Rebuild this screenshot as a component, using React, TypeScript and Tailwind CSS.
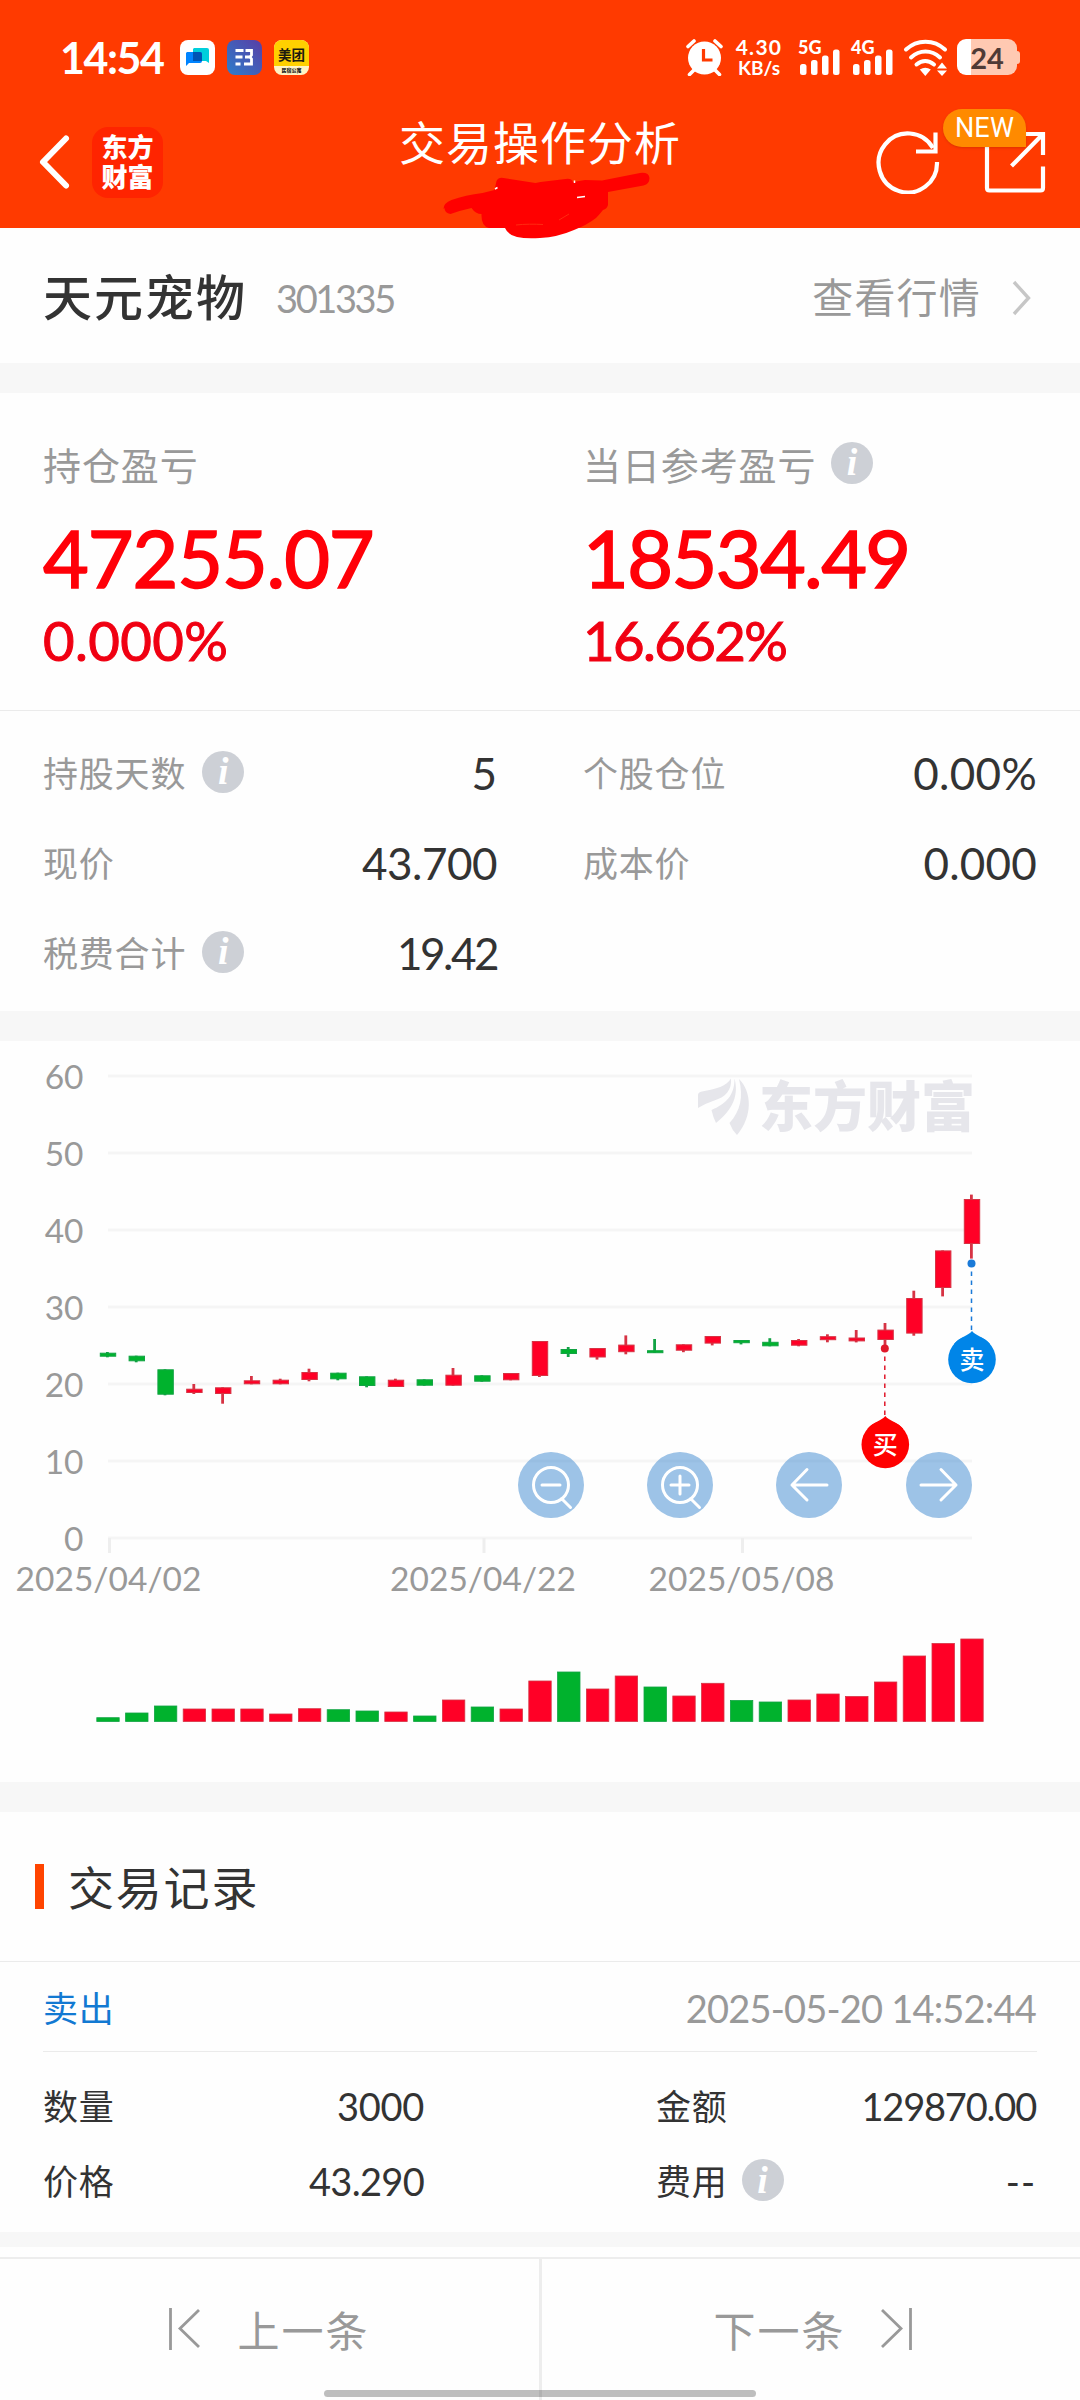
import { Fragment } from "react";
import type { ReactNode } from "react";

type Candle = {
  up: boolean;
  top: number;
  bottom: number;
  high: number;
  low: number;
  volume: number;
};

const RED = "#ff0026";
const GREEN = "#00b22d";
const RED_EDGE = "#d63344";
const GREEN_EDGE = "#12a344";

// up, body top, body bottom, wick top, wick bottom, volume height
const rows: [number, number, number, number, number, number][] = [
  [0, 311.7, 315.7, 311, 316.3, 4.3],
  [0, 314.7, 320.3, 314.7, 321.3, 9],
  [0, 328.3, 353.7, 328.3, 354.3, 16],
  [1, 347.7, 352, 343, 353, 13],
  [1, 346.3, 353, 346.3, 362.7, 13],
  [1, 339.3, 343.3, 335, 343.3, 13],
  [1, 338.7, 343.3, 337.7, 343.3, 8],
  [1, 331, 339, 327.7, 340.3, 13.3],
  [0, 331.7, 338.3, 331.7, 339.3, 12.3],
  [0, 335.3, 345, 335.3, 346.3, 11],
  [1, 338.7, 346, 337.7, 346, 10],
  [0, 338.3, 344.7, 338.3, 344.7, 6],
  [1, 333.7, 344.7, 327, 344.7, 22],
  [0, 334.3, 340.7, 334.3, 340.7, 15],
  [1, 332, 339.3, 332, 339.3, 13],
  [1, 300, 335, 300, 336, 41],
  [0, 308, 313, 306, 316, 50],
  [1, 307, 316.5, 307, 318.6, 33],
  [1, 303.6, 311.2, 294.4, 313.3, 46],
  [0, 309.2, 312, 298, 312, 35],
  [1, 303.3, 309.7, 303.3, 311.2, 26],
  [1, 295, 302.6, 295, 304.4, 38.7],
  [0, 299, 302.2, 299, 303.4, 21.5],
  [0, 300.8, 305.3, 297.2, 305.3, 20],
  [1, 299, 304.7, 298, 305.3, 22],
  [1, 295.2, 299.2, 293.3, 301.3, 28],
  [1, 296.5, 300.4, 289, 301.4, 25.5],
  [1, 288.6, 299, 282, 305, 40],
  [1, 257, 292.6, 249.7, 294.7, 66],
  [1, 209.4, 247, 209.4, 255.4, 78.5],
  [1, 158, 203, 153.6, 217.6, 83],
];

const candles: Candle[] = rows.map(([up, top, bottom, high, low, volume]) => ({
  up: up === 1,
  top,
  bottom,
  high,
  low,
  volume,
}));

const STEP = 28.8;
const LEFT = 108;
const yTicks = [60, 50, 40, 30, 20, 10, 0];
const xTicks = [
  { x: 109.5, label: "2025/04/02" },
  { x: 484, label: "2025/04/22" },
  { x: 742.5, label: "2025/05/08" },
];

const InfoIcon = () => (
  <span className="flex h-[42px] w-[42px] shrink-0 items-center justify-center rounded-full bg-[#cdd0d6] pb-px text-[38px] leading-none font-bold text-white italic [font-family:'Liberation_Serif',serif]">
    i
  </span>
);

const Signal = ({ label }: { label: string }) => (
  <div className="flex h-9 w-[43px] flex-col justify-between">
    <span className="h-0 text-[18px] leading-[16px] font-black">{label}</span>
    <svg width="43" height="26" viewBox="0 0 43 26" fill="currentColor">
      <rect x="2" y="15" width="6.5" height="11" rx="2.5" />
      <rect x="13" y="11" width="6.5" height="15" rx="2.5" />
      <rect x="24" y="6.5" width="6.5" height="19.5" rx="2.5" />
      <rect x="35" y="0.5" width="6.5" height="25.5" rx="2.5" />
    </svg>
  </div>
);

const StatusBar = () => (
  <div className="flex h-[114px] items-center pr-[60px] pl-[60px] text-white">
    <span className="w-[120px] text-[43px] leading-none font-bold tracking-[-1.5px]">14:54</span>
    <div className="flex items-center gap-3">
      <svg width="35" height="35" viewBox="0 0 35 35">
        <rect width="35" height="35" rx="8" fill="#fff" />
        <path d="M14 8h13a2 2 0 0 1 2 2v13l-3-2H13V9z" fill="#00cfdc" />
        <path d="M7 12h13a2 2 0 0 1 2 2v7a2 2 0 0 1-2 2H9l-3 3V13z" fill="#0084ff" />
        <path d="M13 12h7a2 2 0 0 1 2 2v7h-9z" fill="#0054b4" />
      </svg>
      <svg width="35" height="35" viewBox="0 0 35 35">
        <defs>
          <linearGradient id="app" x1="0" y1="1" x2="1" y2="0">
            <stop offset="0" stopColor="#2d7ecb" />
            <stop offset="1" stopColor="#5a3da5" />
          </linearGradient>
        </defs>
        <rect width="35" height="35" rx="8" fill="url(#app)" />
        <path d="M8.500 10.500h8M8.500 17h7M8.500 24h5M18.500 10.500h6v4.500l-1.500 2 1.500 2v5h-7.500M18 17h5" fill="none" stroke="#fff" strokeWidth="2.800" />
      </svg>
      <div className="flex h-[35px] w-[35px] flex-col items-center overflow-hidden rounded-lg bg-[#fff3c4]">
        <span className="h-[26px] w-full bg-[#ffd000] pt-[2px] text-center text-[13.500px] leading-[27px] font-bold text-[#1c1a10]">
          美团
        </span>
        <span className="text-[5px] leading-[8px] font-black text-[#222]">民宿公寓</span>
      </div>
    </div>
    <div className="ml-auto flex items-center">
      <svg className="mr-[11px]" width="37" height="37" viewBox="0 0 37 37">
        <path d="M2 7.500 8 2M29 2l6 5.500M8 31l-4.500 4.500M29 31l4.500 4.500" stroke="#fff" strokeWidth="3.600" strokeLinecap="round" />
        <circle cx="18.500" cy="19" r="16.500" fill="#fff" />
        <path d="M17.500 10v11h9" fill="none" stroke="#ff3a00" strokeWidth="3.200" />
      </svg>
      <div className="mr-[14px] w-[50px] text-center font-bold whitespace-nowrap">
        <div className="text-[21px] leading-[21px] tracking-[1.300px]">4.30</div>
        <div className="text-[19px] leading-[21px]">KB/s</div>
      </div>
      <div className="mr-[10px]">
        <Signal label="5G" />
      </div>
      <div className="mr-[9px]">
        <Signal label="4G" />
      </div>
      <svg className="mr-[9px]" width="45" height="37" viewBox="0 0 45 37">
        <g fill="none" stroke="#fff" strokeWidth="4" strokeLinecap="round">
          <path d="M3 10.500c11-10.500 28-10.500 39 0" />
          <path d="M8 18.500c8.500-8 20.500-8 29 0" />
          <path d="M13.500 25.500c5.500-4.600 12-4.600 17.500 0" />
        </g>
        <path d="M16.800 30.500q5.500-3.500 11 0L22.300 37z" fill="#fff" />
        <path d="M39 23.500l5 6H34zM39 37l5-5.500H34z" fill="#fff" />
      </svg>
      <div className="flex h-9 w-[60px] items-center justify-center rounded-[9px] bg-[linear-gradient(90deg,#fff_14px,#ffc9b2_14px)] text-[29px] leading-none font-bold text-[#4f3a36]">
        24
      </div>
      <span className="h-[13px] w-[3px] rounded-r bg-[#ffc9b2]" />
    </div>
  </div>
);

const Header = () => (
  <header className="relative h-[228px] bg-[#ff3a00]">
    <StatusBar />
    <div className="flex h-[96px] items-center pr-[34px] pl-[38px] text-white">
      <svg width="34" height="56" viewBox="0 0 34 56" fill="none">
        <path d="M28 4.500 5 28l23 23.500" stroke="#fff" strokeWidth="6" strokeLinecap="round" strokeLinejoin="round" />
      </svg>
      <div className="ml-[20px] flex h-[71px] w-[71px] flex-col items-center justify-center rounded-2xl bg-[#ff2400] text-[26px] leading-[30px] font-black">
        <span>东方</span>
        <span>财富</span>
      </div>
      <h1 className="ml-[236px] pb-[38px] text-[46px] leading-none tracking-[1px]">交易操作分析</h1>
      <div className="ml-auto flex items-center gap-[44px]">
        <svg width="64" height="64" viewBox="0 0 64 64" fill="none" stroke="#fff" strokeWidth="4.200">
          <path d="M61 32A29.200 29.500 0 1 1 57 18" />
          <path d="M59.500 2.500V21.500H40" />
        </svg>
        <div className="relative">
          <svg width="62" height="64" viewBox="0 0 62 64" fill="none" stroke="#fff" strokeWidth="4.200">
            <path d="M3 8v50q0 2.500 2.500 2.500h51q2.500 0 2.500-2.500V36.500" />
            <path d="M59 25V4H38M59 4 27.500 36" />
          </svg>
          <span className="absolute -top-[21px] -left-[41px] flex h-[38px] w-[83px] items-center justify-center rounded-[19px] rounded-br-none bg-[#ff8a00] text-[27px] tracking-[0.200px] shadow [font-family:Roboto,sans-serif]">
            NEW
          </span>
        </div>
      </div>
    </div>
    <svg className="absolute top-[170px] left-[440px]" width="214" height="72" viewBox="440 170 214 72">
      <path
        d="M443.500 209q0-6 8-9 14-5 31-7l12-3 2-9q2-4 7-3l32 5 5-1 25-3q6-1 7.500 3l12-2 17 .5 38-7.500q9-1 9.500 5 0 6-6 7.500L608 192v13q-1 4-5 5-4 5-7 8-9 7-22 12-16 7-34 8-14 1-23-1-9-2-12-9h-16q-8-2-7.500-14-6 0-10-6l-12 3-9 3q-6-1-6-6z"
        fill="#f00"
      />
      <path d="M495 189l2.500-1.500M574.500 180.500v2.500M577 197.500l8-1" stroke="#fff" strokeWidth="1.500" />
      <path d="M516 225c9-1 18-1 27-.5M559 220l10-6" stroke="#ff2a10" strokeWidth="1" fill="none" />
    </svg>
  </header>
);

const StockBar = () => (
  <div className="flex h-[135px] items-center pt-1 pr-[48px] pl-[43px]">
    <span className="text-[49px] leading-none font-medium tracking-[2px] text-[#333]">天元宠物</span>
    <span className="ml-[29px] text-[38px] leading-none tracking-[-2.400px] text-[#999]">301335</span>
    <span className="ml-auto text-[41px] leading-none tracking-[1.200px] text-[#999]">查看行情</span>
    <svg className="ml-[31px]" width="20" height="36" viewBox="0 0 20 36" fill="none">
      <path d="M2 2l14.500 16L2 34" stroke="#c6c6c6" strokeWidth="3.400" />
    </svg>
  </div>
);

const Divider = () => <div className="h-[30px] bg-[#f7f7f7]" />;

const Profit = () => (
  <section className="grid h-[318px] grid-cols-2 border-b border-[#ebebeb] pt-[44px]">
    <div className="pl-[43px]">
      <div className="flex h-[56px] items-center text-[38px] tracking-[0.900px] text-[#999]">持仓盈亏</div>
      <div className="mt-[25px] text-[79px] leading-[80px] tracking-[-1.100px] text-[#ff0008] [-webkit-text-stroke:1.6px_#ff0008]">
        47255.07
      </div>
      <div className="mt-[14px] text-[54.500px] leading-[56px] tracking-[0.400px] text-[#f00012] [-webkit-text-stroke:1px_#f00012]">
        0.000%
      </div>
    </div>
    <div className="pl-[43px]">
      <div className="flex h-[56px] items-center gap-[15px] text-[38px] tracking-[0.900px] text-[#999]">
        <span>当日参考盈亏</span>
        <span className="pb-[5px]">
          <InfoIcon />
        </span>
      </div>
      <div className="mt-[25px] text-[79px] leading-[80px] tracking-[-1.600px] text-[#ff0008] [-webkit-text-stroke:1.6px_#ff0008]">
        18534.49
      </div>
      <div className="mt-[14px] text-[54.500px] leading-[56px] tracking-[-1.600px] text-[#f00012] [-webkit-text-stroke:1px_#f00012]">
        16.662%
      </div>
    </div>
  </section>
);

type StatProps = { label: string; info?: boolean; children: ReactNode };

const Stat = ({ label, info, children }: StatProps) => (
  <div className="flex h-[90px] items-center pr-[43px] pl-[43px]">
    <span className="text-[35px] tracking-[0.800px] text-[#999]">{label}</span>
    {info && (
      <span className="ml-[16px] pb-[3px]">
        <InfoIcon />
      </span>
    )}
    <span className="ml-auto text-[44px] leading-none text-[#333]">{children}</span>
  </div>
);

const Stats = () => (
  <section className="grid h-[300px] grid-cols-2 content-start pt-[17px]">
    <Stat label="持股天数" info>
      5
    </Stat>
    <Stat label="个股仓位">
      <span className="tracking-[0.300px]">0.00%</span>
    </Stat>
    <Stat label="现价">
      <span className="tracking-[-0.500px]">43.700</span>
    </Stat>
    <Stat label="成本价">
      <span className="tracking-[0.200px]">0.000</span>
    </Stat>
    <Stat label="税费合计" info>
      <span className="tracking-[-2.500px]">19.42</span>
    </Stat>
  </section>
);

type PinProps = { x: number; y: number; from: number; color: string; dot: string; label: string };

const Pin = ({ x, y, from, color, dot, label }: PinProps) => (
  <g>
    <circle cx={x - 0.5} cy={from} r="4" fill={dot} />
    <line x1={x - 0.5} x2={x - 0.5} y1={from + 8} y2={y - 28} stroke={dot} strokeWidth="1.500" strokeDasharray="4.500 4.500" />
    <circle cx={x} cy={y + 0.5} r="23.800" fill={color} />
    <path d={`M${x} ${y - 28}c4 5 11 5 18 13h-36c7-8 14-8 18-13z`} fill={color} />
    <text x={x} y={y + 10} fontSize="25" fontWeight="500" fill="#fff" textAnchor="middle">
      {label}
    </text>
  </g>
);

const controls: { name: string; d: string }[] = [
  { name: "缩小", d: "M33 15.500a17.500 17.500 0 1 0 0 35a17.500 17.500 0 1 0 0-35M24 33h18M43.500 46.500l9 9" },
  { name: "放大", d: "M33 15.500a17.500 17.500 0 1 0 0 35a17.500 17.500 0 1 0 0-35M24 33h18M33 24v18M43.500 46.500l9 9" },
  { name: "左移", d: "M51 33H16M31 17.500 16 33l15 15" },
  { name: "右移", d: "M15 33h35M35 17.500 50 33 35 48" },
];

const Chart = () => (
  <section className="relative h-[741px]">
    <svg width="1080" height="741" viewBox="0 0 1080 741">
      {yTicks.map((v) => {
        const y = 497 - v * 7.7;
        return (
          <Fragment key={v}>
            <rect x={LEFT} y={y - 1.5} width="864" height="3" fill="#f5f5f5" />
            <text x="83.500" y={y + 13} fontSize="33.500" fill="#999" textAnchor="end">
              {v}
            </text>
          </Fragment>
        );
      })}
      {xTicks.map((t) => (
        <Fragment key={t.label}>
          <rect x={t.x - 1.5} y="497" width="3" height="15" fill="#eee" />
          <text x={t.x - 1} y="550" fontSize="33.500" fill="#999" textAnchor="middle" textLength="186">
            {t.label}
          </text>
        </Fragment>
      ))}
      <g fill="#e6e6eb">
        <path d="M698 54q0-3 4-3.500C716 48 727 45 731 37.500 732 49 726 56 713 60q-9 3-15 7z" />
        <path d="M734.500 37.500c4 15 0 30-18.500 44.500q-3-6-4.500-13c14-6 23-14 23-31.500z" />
        <path d="M739 38c13 13 14 37-2 56q-5-5-7.500-12c11-12 14-26 9.500-44z" />
        <text x="759" y="86" fontSize="54" fontWeight="900" textLength="216">
          东方财富
        </text>
      </g>
      {candles.map((c, i) => {
        const x = LEFT + i * STEP;
        const fill = c.up ? RED : GREEN;
        const edge = c.up ? RED_EDGE : GREEN_EDGE;
        return (
          <g key={i} fill={fill}>
            <rect x={x - 2} y={c.high} width="2.800" height={c.low - c.high} fill={edge} />
            <rect x={x - 7.7} y={c.top + 0.5} width="15.400" height={Math.max(c.bottom - c.top - 1, 2)} stroke={edge} />
            <rect x={x - 11.2} y={681 - c.volume} width="22.400" height={c.volume - 0.5} stroke={edge} strokeWidth="0.800" />
          </g>
        );
      })}
    </svg>
    <div className="absolute top-[411px] left-[518px] flex gap-[63.200px]">
      {controls.map((c) => (
        <button key={c.name} aria-label={c.name} className="h-[66px] w-[66px] rounded-full bg-[#3c87d0]/50">
          <svg width="66" height="66" viewBox="0 0 66 66" fill="none" stroke="#fff" strokeWidth="3" strokeLinecap="round" strokeLinejoin="round">
            <path d={c.d} />
          </svg>
        </button>
      ))}
    </div>
    <svg className="pointer-events-none absolute inset-0" width="1080" height="741" viewBox="0 0 1080 741">
      <Pin x={972} y={318} from={222.500} color="#0085e8" dot="#1a7ad8" label="卖" />
      <Pin x={885.300} y={403} from={307.600} color="#f00" dot="#e0182a" label="买" />
    </svg>
  </section>
);

const Records = () => (
  <section className="text-[#333]">
    <div className="flex h-[150px] items-center border-b border-[#ebebeb] pl-[35px]">
      <span className="h-[45px] w-[9px] bg-[#ff4400]" />
      <h2 className="ml-[24px] pt-[3px] text-[46px] leading-none tracking-[1.800px]">交易记录</h2>
    </div>
    <div className="mx-[43px] flex h-[90px] items-center justify-between border-b border-[#ebebeb] pt-[3px] pr-px">
      <span className="text-[35px] tracking-[0.800px] text-[#1279d2]">卖出</span>
      <span className="text-[38px] tracking-[-0.800px] text-[#999]">2025-05-20 14:52:44</span>
    </div>
    <div className="grid h-[180px] grid-cols-[381px_1fr] content-start gap-x-[232px] pt-[17px] pr-[44px] pl-[43px] text-[38px]">
      <div className="flex h-[75px] items-center justify-between">
        <span className="text-[35px] tracking-[0.800px]">数量</span>
        <span className="tracking-[-0.300px]">3000</span>
      </div>
      <div className="flex h-[75px] items-center justify-between">
        <span className="text-[35px] tracking-[0.800px]">金额</span>
        <span className="tracking-[-1.200px]">129870.00</span>
      </div>
      <div className="flex h-[75px] items-center justify-between">
        <span className="text-[35px] tracking-[0.800px]">价格</span>
        <span className="tracking-[-0.700px]">43.290</span>
      </div>
      <div className="flex h-[75px] items-center">
        <span className="mr-[14px] text-[35px] tracking-[0.800px]">费用</span>
        <span className="pb-[3px]">
          <InfoIcon />
        </span>
        <span className="ml-auto tracking-[1px]">--</span>
      </div>
    </div>
  </section>
);

const Footer = () => (
  <footer className="relative flex h-[143px] border-t-2 border-[#ededed] text-[42px] leading-none text-[#999]">
    <button className="flex w-[542px] items-start justify-center gap-[36px] border-r-[3px] border-[#ededed] pt-[49px]">
      <svg width="32" height="42" viewBox="0 0 32 42" fill="none" stroke="#999" strokeWidth="2.800">
        <path d="M1.500 0v42M30 2 11 20.500 30 39" />
      </svg>
      <span className="pt-[2px] tracking-[2px]">上一条</span>
    </button>
    <button className="flex flex-1 items-start justify-center gap-[34px] pt-[49px] pl-[3px]">
      <span className="pt-[2px] tracking-[2px]">下一条</span>
      <svg width="32" height="42" viewBox="0 0 32 42" fill="none" stroke="#999" strokeWidth="2.800">
        <path d="M30.500 0v42M2 2l19 18.500L2 39" />
      </svg>
    </button>
    <span className="absolute bottom-[3px] left-[324px] h-[7px] w-[432px] rounded-full bg-black/25" />
  </footer>
);

export default function App() {
  return (
    <main className="h-[2400px] w-[1080px] overflow-hidden bg-[#fefefe] [font-family:Lato,'Noto_Sans_CJK_SC',sans-serif]">
      <Header />
      <StockBar />
      <Divider />
      <Profit />
      <Stats />
      <Divider />
      <Chart />
      <Divider />
      <Records />
      <div className="mb-[10px] h-[15px] bg-[#f7f7f7]" />
      <Footer />
    </main>
  );
}
